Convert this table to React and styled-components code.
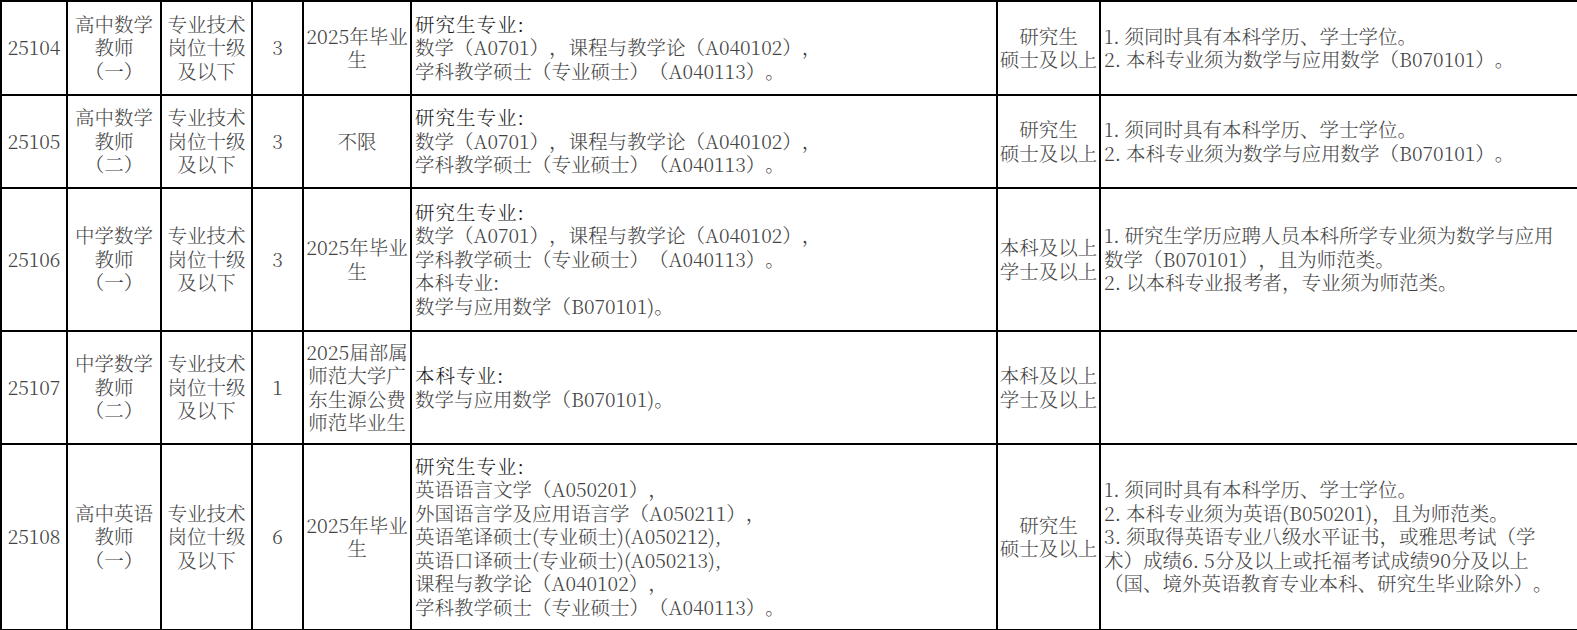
import React from 'react'
import styled, { createGlobalStyle } from 'styled-components'

const GlobalStyle = createGlobalStyle`
  html, body {
    margin: 0;
    padding: 0;
    background: #ffffff;
  }
`

const Table = styled.table`
  width: 1577px;
  table-layout: fixed;
  border-collapse: collapse;
  font-family: 'Noto Serif CJK SC', 'Liberation Serif', 'Noto Sans CJK SC', serif;
  font-size: 19.5px;
  font-weight: 300;
  line-height: 23.5px;
  color: #444444;
  font-feature-settings: 'chws' 0, 'halt' 0, 'palt' 0;
  font-kerning: none;
  text-spacing-trim: space-all;
`

const Row = styled.tr`
  height: ${(p) => p.$h}px;
`

const Cell = styled.td`
  border: 2px solid #000000;
  padding: 0 ${(p) => (p.$left ? '3px' : '0')};
  text-align: ${(p) => (p.$left ? 'left' : 'center')};
  vertical-align: middle;
  white-space: nowrap;
  overflow: hidden;
`

const Line = styled.span`
  display: block;
  color: ${(p) => (p.$label ? '#1a1a1a' : 'inherit')};
  letter-spacing: ${(p) => (p.$label ? '1px' : '0')};
`

const widths = [66, 94, 91, 51, 108, 586, 103, 479]

const gradMath = [
  { t: '研究生专业:', label: true },
  '数学（A0701），课程与教学论（A040102），',
  '学科教学硕士（专业硕士）（A040113）。',
]

const mathOther = ['1. 须同时具有本科学历、学士学位。', '2. 本科专业须为数学与应用数学（B070101）。']

const rows = [
  {
    h: 94,
    code: '25104',
    post: ['高中数学', '教师', '（一）'],
    level: ['专业技术', '岗位十级', '及以下'],
    count: '3',
    target: ['2025年毕业', '生'],
    major: gradMath,
    edu: ['研究生', '硕士及以上'],
    other: mathOther,
  },
  {
    h: 93,
    code: '25105',
    post: ['高中数学', '教师', '（二）'],
    level: ['专业技术', '岗位十级', '及以下'],
    count: '3',
    target: ['不限'],
    major: gradMath,
    edu: ['研究生', '硕士及以上'],
    other: mathOther,
  },
  {
    h: 143,
    code: '25106',
    post: ['中学数学', '教师', '（一）'],
    level: ['专业技术', '岗位十级', '及以下'],
    count: '3',
    target: ['2025年毕业', '生'],
    major: [...gradMath, '本科专业:', '数学与应用数学（B070101)。'],
    edu: ['本科及以上', '学士及以上'],
    other: [
      '1. 研究生学历应聘人员本科所学专业须为数学与应用',
      '数学（B070101），且为师范类。',
      '2. 以本科专业报考者，专业须为师范类。',
    ],
  },
  {
    h: 113,
    code: '25107',
    post: ['中学数学', '教师', '（二）'],
    level: ['专业技术', '岗位十级', '及以下'],
    count: '1',
    target: ['2025届部属', '师范大学广', '东生源公费', '师范毕业生'],
    major: [{ t: '本科专业:', label: true }, '数学与应用数学（B070101)。'],
    edu: ['本科及以上', '学士及以上'],
    other: [],
  },
  {
    h: 186,
    code: '25108',
    post: ['高中英语', '教师', '（一）'],
    level: ['专业技术', '岗位十级', '及以下'],
    count: '6',
    target: ['2025年毕业', '生'],
    major: [
      { t: '研究生专业:', label: true },
      '英语语言文学（A050201），',
      '外国语言学及应用语言学（A050211），',
      '英语笔译硕士(专业硕士)(A050212),',
      '英语口译硕士(专业硕士)(A050213),',
      '课程与教学论（A040102），',
      '学科教学硕士（专业硕士）（A040113）。',
    ],
    edu: ['研究生', '硕士及以上'],
    other: [
      '1. 须同时具有本科学历、学士学位。',
      '2. 本科专业须为英语(B050201)，且为师范类。',
      '3. 须取得英语专业八级水平证书，或雅思考试（学',
      '术）成绩6. 5分及以上或托福考试成绩90分及以上',
      '（国、境外英语教育专业本科、研究生毕业除外）。',
    ],
  },
]

const Lines = ({ items }) =>
  items.map((item, i) =>
    typeof item === 'string' ? (
      <Line key={i}>{item}</Line>
    ) : (
      <Line key={i} $label={item.label}>
        {item.t}
      </Line>
    )
  )

const App = () => (
  <>
    <GlobalStyle />
    <Table>
      <colgroup>
        {widths.map((w, i) => (
          <col key={i} style={{ width: w }} />
        ))}
      </colgroup>
      <tbody>
        {rows.map((r) => (
          <Row key={r.code} $h={r.h}>
            <Cell>{r.code}</Cell>
            <Cell>
              <Lines items={r.post} />
            </Cell>
            <Cell>
              <Lines items={r.level} />
            </Cell>
            <Cell>{r.count}</Cell>
            <Cell>
              <Lines items={r.target} />
            </Cell>
            <Cell $left>
              <Lines items={r.major} />
            </Cell>
            <Cell>
              <Lines items={r.edu} />
            </Cell>
            <Cell $left>
              <Lines items={r.other} />
            </Cell>
          </Row>
        ))}
      </tbody>
    </Table>
  </>
)

export default App
